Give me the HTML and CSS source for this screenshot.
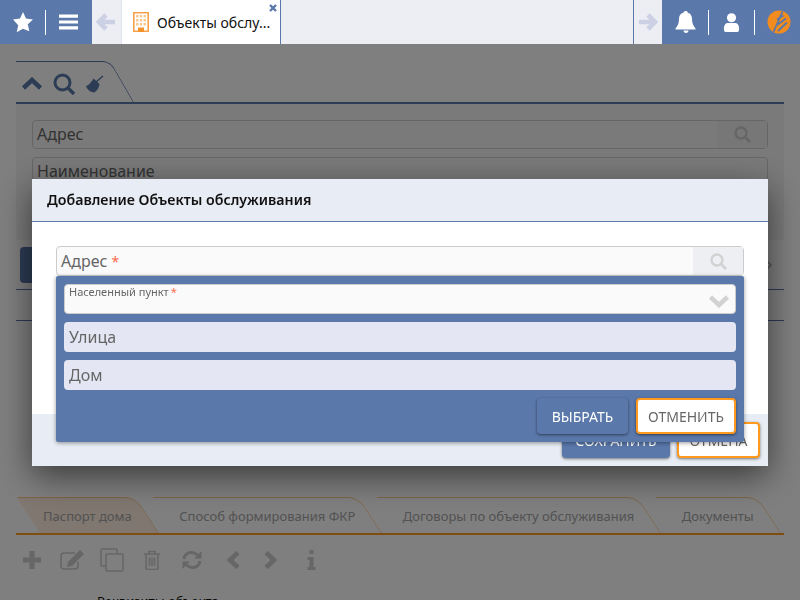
FILE: index.html
```html
<!DOCTYPE html>
<html lang="ru">
<head>
  <meta charset="UTF-8">
  <title>Объекты обслуживания</title>
  <link rel="stylesheet" href="styles.css">
</head>
<body>
  <header class="topbar">
    <div class="bar-left">
      <svg class="ico-star" viewBox="0 0 22 22"><path d="M11 1l3 6.600 7 .8-5.200 4.800 1.500 7.100L11 17.700 4.700 21.300l1.500-7.100L1 8.400l7-.8z" fill="#fff"/></svg>
      <span class="bar-sep"></span>
      <svg class="ico-menu" viewBox="0 0 20 16"><path d="M0 0h20v3.400H0zM0 6.300h20v3.400H0zM0 12.600h20V16H0z" fill="#fff"/></svg>
    </div>
    <div class="bar-arrow">
      <svg class="ico-arrow" viewBox="0 0 20 18"><path d="M10 2L3 9l7 7M4 9h15" fill="none" stroke="#ccd0e4" stroke-width="4.600"/></svg>
    </div>
    <div class="doc-tab">
      <svg class="ico-building" viewBox="0 0 16 20"><path d="M.8.800h14.400V19.200H.8z" fill="#fff" stroke="#f7a24a" stroke-width="1.600"/><path d="M3 3h2.400v2.400H3zM6.800 3h2.400v2.400H6.800zM10.600 3H13v2.400h-2.400zM3 7h2.400v2.400H3zM6.800 7h2.400v2.400H6.800zM10.600 7H13v2.400h-2.400zM3 11h2.400v2.400H3zM6.800 11h2.400v2.400H6.800zM10.600 11H13v2.400h-2.400z" fill="#fbc78f"/><path d="M5 15.500h6V20H5z" fill="#f7912a"/></svg>
      <span class="doc-title">Объекты обслу...</span>
      <svg class="ico-close" viewBox="0 0 8 8"><path d="M1 1l6 6M7 1L1 7" stroke="#5a78aa" stroke-width="2.400"/></svg>
    </div>
    <div class="bar-fill"></div>
    <div class="bar-arrow bar-arrow-next">
      <svg class="ico-arrow" viewBox="0 0 20 18"><path d="M10 2l7 7-7 7M16 9H1" fill="none" stroke="#ccd0e4" stroke-width="4.600"/></svg>
    </div>
    <div class="bar-right">
      <svg class="ico-bell" viewBox="0 0 22 22"><path d="M11 0c1 0 1.700.7 1.700 1.700 3 .7 4.300 3.200 4.300 6.300 0 4.500 1.500 7 3.500 9.500v1H.5v-1C2.500 15 4 12.500 4 8c0-3.100 1.300-5.600 4.300-6.300C8.300.7 10 0 11 0zM8.500 19.500h5c0 1.500-1 2.500-2.500 2.500s-2.500-1-2.500-2.500z" fill="#fff"/></svg>
      <span class="bar-sep"></span>
      <svg class="ico-user" viewBox="0 0 16 20"><circle cx="8" cy="5" r="4.800" fill="#fff"/><path d="M0 17c0-4 1.500-6.500 4-6.500h8c2.500 0 4 2.500 4 6.500 0 2-1 3-2.500 3h-11C1 20 0 19 0 17z" fill="#fff"/></svg>
      <span class="bar-sep"></span>
      <svg class="ico-logo" viewBox="0 0 24 24"><circle cx="12" cy="12" r="11.500" fill="#f28c1e"/><path d="M6.500 22L15.500 1.500M10 9.500l6.500-4M10 15l9-6.500M11 21l9-8.500" fill="none" stroke="#5a78aa" stroke-width="1.800"/></svg>
    </div>
  </header>

  <main class="page">
    <div class="filter-tab">
      <svg class="ico-up" viewBox="0 0 22 14"><path d="M2.500 11L11 3l8.500 8" fill="none" stroke="#5a78aa" stroke-width="4.500"/></svg>
      <svg class="ico-find" viewBox="0 0 22 22"><circle cx="9.500" cy="9.500" r="7.500" fill="none" stroke="#5a78aa" stroke-width="3"/><path d="M15 15l6 6" stroke="#5a78aa" stroke-width="3.400"/></svg>
      <svg class="ico-broom" viewBox="0 0 18 18"><path d="M10 7l7-6" stroke="#5a78aa" stroke-width="1.600"/><path d="M7.500 3.500l6 5.500c-.5 4-3 7.500-5.500 8.500-3.500-.5-7-3-8-6.500 3-1 5.500-4 7.500-7.500z" fill="#5a78aa"/></svg>
    </div>
    <section class="filter-panel">
      <div class="filter-field">
        <span>Адрес</span>
        <span class="filter-btn"><svg class="ico-search" viewBox="0 0 17 17"><circle cx="7" cy="7" r="5.500" fill="none" stroke="#ccc" stroke-width="2.400"/><path d="M11 11l5 5" stroke="#ccc" stroke-width="2.800"/></svg></span>
      </div>
      <div class="filter-field"><span>Наименование</span></div>
    </section>
    <div class="action-row">
      <span class="dark-btn"></span>
      <svg class="ico-more" viewBox="0 0 6 10"><path d="M1 1l4 4-4 4" fill="none" stroke="#aaa" stroke-width="1.500"/></svg>
    </div>
    <div class="empty-row"></div>

    <nav class="tabs">
      <span class="tab tab-active">Паспорт дома</span>
      <span class="tab">Способ формирования ФКР</span>
      <span class="tab">Договоры по объекту обслуживания</span>
      <span class="tab">Документы</span>
    </nav>

    <div class="toolbar">
      <svg class="tool tool-plus" viewBox="0 0 20 20"><path d="M7.500 1h5v6.500H19v5h-6.500V19h-5v-6.500H1v-5h6.500z" fill="#ccc"/></svg>
      <svg class="tool tool-edit" viewBox="0 0 24 20"><path d="M18 12v4a3 3 0 0 1-3 3H4a3 3 0 0 1-3-3V6a3 3 0 0 1 3-3h11" fill="none" stroke="#ccc" stroke-width="1.600"/><path d="M20 0l4 4-12 12-5 1 1-5z" fill="#ccc"/></svg>
      <svg class="tool tool-copy" viewBox="0 0 24 24"><path d="M6 18H2a1 1 0 0 1-1-1V2a1 1 0 0 1 1-1h14a1 1 0 0 1 1 1v4" fill="none" stroke="#ccc" stroke-width="1.500"/><rect x="6" y="6" width="17" height="17" rx="1" fill="none" stroke="#ccc" stroke-width="1.500"/></svg>
      <svg class="tool tool-trash" viewBox="0 0 18 20"><path d="M1 4h16M6 4V1.500h6V4M3 4v14a1.500 1.500 0 0 0 1.500 1.500h9A1.500 1.500 0 0 0 15 18V4M6.500 7.500v8.500M9 7.500v8.500M11.500 7.500v8.500" fill="none" stroke="#ccc" stroke-width="1.600"/></svg>
      <svg class="tool tool-sync" viewBox="0 0 20 20"><path d="M2 9c.5-4 3.500-6.500 7.500-6.500 2.500 0 4.500 1 6 2.500M18 11c-.5 4-3.500 6.500-7.500 6.500-2.500 0-4.500-1-6-2.500" fill="none" stroke="#ccc" stroke-width="3"/><path d="M19.500 1v7.500H12zM.5 19v-7.500H8z" fill="#ccc"/></svg>
      <svg class="tool tool-prev" viewBox="0 0 16 20"><path d="M13 2.500L5 10l8 7.500" fill="none" stroke="#ccc" stroke-width="4.600"/></svg>
      <svg class="tool tool-next" viewBox="0 0 16 20"><path d="M3 2.500l8 7.500-8 7.500" fill="none" stroke="#ccc" stroke-width="4.600"/></svg>
      <svg class="tool tool-info" viewBox="0 0 8 20"><path d="M2 0h4v4H2zM0 7h6v10h2v3H0v-3h2v-7H0z" fill="#ccc"/></svg>
    </div>

    <fieldset class="details">
      <legend>Реквизиты объекта</legend>
    </fieldset>
  </main>

  <div class="overlay">
    <div class="modal">
      <div class="modal-head">Добавление Объекты обслуживания</div>
      <div class="modal-body">
        <div class="address">
          <span class="address-label">Адрес <i>*</i></span>
          <span class="address-btn"><svg class="ico-search" viewBox="0 0 17 17"><circle cx="7" cy="7" r="5.500" fill="none" stroke="#d2d2d2" stroke-width="2.400"/><path d="M11 11l5 5" stroke="#d2d2d2" stroke-width="2.800"/></svg></span>
        </div>
        <div class="picker">
          <div class="picker-select">
            <span class="picker-label">Населенный пункт<i>*</i></span>
            <svg class="ico-down" viewBox="0 0 22 14"><path d="M2.500 3L11 11l8.500-8" fill="none" stroke="#d2d2d2" stroke-width="4.500"/></svg>
          </div>
          <div class="picker-field">Улица</div>
          <div class="picker-field">Дом</div>
          <div class="picker-actions">
            <button class="btn btn-blue btn-pick">ВЫБРАТЬ</button>
            <button class="btn btn-white btn-undo">ОТМЕНИТЬ</button>
          </div>
        </div>
      </div>
      <div class="modal-foot">
        <button class="btn btn-blue btn-save">СОХРАНИТЬ</button>
        <button class="btn btn-white btn-cancel">ОТМЕНА</button>
      </div>
    </div>
  </div>
</body>
</html>
```

FILE: styles.css
```css
html, body {
  height: 100%;
  overflow: hidden;
}
body {
  margin: 0;
  background: #fff;
  font-family: "Noto Sans", sans-serif;
  color: #666;
}
svg {
  display: block;
  flex: none;
}

/* top bar */
.topbar {
  display: flex;
  height: 44px;
  background: #eceef4;
}
.bar-left, .bar-right {
  display: flex;
  align-items: center;
  background: #5a78aa;
}
.bar-left {
  width: 92px;
  padding-left: 12px;
  box-sizing: border-box;
}
.bar-right {
  width: 138px;
  padding-left: 13px;
  box-sizing: border-box;
}
.bar-sep {
  width: 1px;
  height: 25px;
  background: #fff;
}
.ico-star { width: 22px; height: 22px; margin-right: 11px; }
.ico-menu { width: 19px; height: 16px; margin-left: 13px; }
.ico-bell { width: 22px; height: 22px; margin-right: 11px; }
.ico-user { width: 17px; height: 19px; margin: 0 14px; }
.ico-logo { width: 24px; height: 24px; margin-left: 12px; }
.bar-arrow {
  display: flex;
  align-items: center;
  justify-content: center;
  width: 28px;
}
.bar-arrow-next {
  border-left: 1px solid #5a78aa;
}
.ico-arrow { width: 20px; height: 18px; }
.doc-tab {
  display: flex;
  align-items: center;
  position: relative;
  width: 160px;
  margin-left: 1px;
  padding-left: 11px;
  box-sizing: border-box;
  background: #fff;
  border-left: 1px solid #dfe4ee;
  border-right: 1px solid #5a78aa;
}
.ico-building { width: 16px; height: 20px; margin-right: 8px; }
.doc-title {
  font-size: 14px;
  color: #111;
  white-space: nowrap;
}
.ico-close {
  position: absolute;
  top: 4px;
  right: 3px;
  width: 8px;
  height: 8px;
}
.bar-fill { flex: 1; }

/* page under the dialog */
.page {
  padding: 17px 16px 0;
}
.filter-tab {
  display: flex;
  align-items: center;
  position: relative;
  width: 118px;
  height: 41px;
  box-sizing: border-box;
  padding: 5px 0 0 5px;
}
.filter-tab::before {
  content: "";
  position: absolute;
  top: 0;
  left: 23px;
  right: 0;
  height: 40px;
  border-top: 1px solid #5a78aa;
  border-right: 1px solid #5a78aa;
  border-radius: 0 8px 0 0;
  transform: skewX(30deg);
  transform-origin: bottom right;
}
.ico-up { width: 22px; height: 14px; }
.ico-find { width: 22px; height: 22px; margin-left: 10px; }
.ico-broom { width: 18px; height: 18px; margin-left: 11px; }
.filter-panel {
  height: 138px;
  padding: 16px 16px 0;
  box-sizing: border-box;
  background: #f5f5f5;
  border-top: 2px solid #5a78aa;
}
.filter-field {
  display: flex;
  justify-content: space-between;
  height: 29px;
  box-sizing: border-box;
  margin-bottom: 8px;
  padding-left: 4px;
  font-size: 16px;
  line-height: 27px;
  border: 1px solid #ccc;
  border-radius: 4px;
}
.filter-btn {
  display: flex;
  align-items: center;
  justify-content: center;
  width: 50px;
  background: #eee;
}
.ico-search { width: 17px; height: 17px; }
.action-row {
  display: flex;
  justify-content: space-between;
  align-items: center;
  height: 49px;
  padding: 0 12px 0 4px;
  border-bottom: 1px solid #5a78aa;
}
.dark-btn {
  width: 120px;
  height: 36px;
  background: #5a78aa;
  border-radius: 4px;
}
.ico-more { width: 6px; height: 10px; }
.empty-row {
  height: 30px;
  border-bottom: 1px solid #5a78aa;
}

/* tabs */
.tabs {
  display: flex;
  height: 36px;
  margin-top: 176px;
  padding-left: 24px;
  border-bottom: 2px solid #ff9a1f;
}
.tab {
  position: relative;
  height: 36px;
  margin-right: 17.5px;
  padding: 0 27px 0 3px;
  font-size: 13px;
  line-height: 38px;
  color: #a4a4a4;
  white-space: nowrap;
}
.tab::before {
  content: "";
  position: absolute;
  top: 0;
  left: 0;
  right: 0;
  bottom: 0;
  z-index: -1;
  border-top: 1px solid #ffc78a;
  border-right: 1px solid #ffc78a;
  border-radius: 0 10px 0 0;
  transform: skewX(33deg);
  transform-origin: bottom right;
}
.tab-active::before {
  background: #ffefe0;
}
.toolbar {
  display: flex;
  align-items: center;
  height: 50px;
  padding-left: 6px;
}
.tool { height: 20px; }
.tool-plus { width: 20px; margin-right: 18px; }
.tool-edit { width: 24px; margin-right: 16px; }
.tool-copy { width: 24px; height: 24px; margin-right: 19px; }
.tool-trash { width: 18px; margin-right: 20px; }
.tool-sync { width: 22px; margin-right: 22px; }
.tool-prev { width: 16px; margin-right: 22px; }
.tool-next { width: 16px; margin-right: 28px; }
.tool-info { width: 9px; }
.details {
  margin: 7px 0 0;
  padding: 0;
  border: 0;
  border-top: 1px solid #ff9a1f;
}
.details legend {
  margin-left: 32px;
  padding: 0 16px 0 49px;
  font-size: 13px;
  color: #111;
}

/* dialog */
.overlay {
  position: fixed;
  top: 44px;
  left: 0;
  right: 0;
  bottom: 0;
  padding: 135px 32px 0;
  background: rgba(0, 0, 0, 0.5);
}
.modal {
  position: relative;
  background: #fff;
  box-shadow: 0 10px 32px rgba(0, 0, 0, 0.55);
}
.modal-head {
  height: 42px;
  padding-left: 15px;
  font-size: 14.2px;
  font-weight: 600;
  line-height: 42px;
  color: #111;
  background: #e8ecf4;
  border-bottom: 1px solid #5a78aa;
}
.modal-body {
  position: relative;
  height: 192px;
  padding: 24px 24px 0;
  box-sizing: border-box;
}
.address {
  display: flex;
  justify-content: space-between;
  height: 30px;
  padding-left: 4px;
  box-sizing: border-box;
  font-size: 16px;
  line-height: 28px;
  background: #fafafa;
  border: 1px solid #ccc;
  border-radius: 4px;
}
.address-label i, .picker-label i {
  font-style: normal;
  color: #ff6a4d;
}
.address-label i {
  font-size: 14px;
}
.address-btn {
  display: flex;
  align-items: center;
  justify-content: center;
  width: 50px;
  background: #eeeff3;
}
.picker {
  position: absolute;
  top: 54px;
  left: 24px;
  right: 24px;
  height: 166px;
  padding: 8px;
  box-sizing: border-box;
  background: #5a78aa;
  border-radius: 2px;
  box-shadow: 0 1px 4px rgba(0, 0, 0, 0.4);
}
.picker-select {
  display: flex;
  justify-content: space-between;
  height: 30px;
  padding: 0 5px 0 4px;
  box-sizing: border-box;
  background: #fafafa;
  border: 1px solid #ccc;
  border-radius: 4px;
}
.picker-label {
  font-size: 11px;
  line-height: 13px;
}
.picker-label i {
  margin-left: 2px;
}
.ico-down { width: 22px; height: 14px; margin-top: 9px; }
.picker-field {
  height: 30px;
  margin-top: 8px;
  padding-left: 5px;
  font-size: 16px;
  line-height: 30px;
  background: #e4e6f3;
  border-radius: 4px;
}
.picker-actions {
  display: flex;
  justify-content: flex-end;
  gap: 8px;
  margin-top: 8px;
}
.btn {
  height: 36px;
  padding: 0;
  font-family: inherit;
  font-size: 14px;
  border-radius: 4px;
  box-shadow: 0 1px 3px rgba(0, 0, 0, 0.5);
}
.btn-blue {
  color: #fff;
  background: #5a78aa;
  border: 0;
}
.btn-white {
  color: #666;
  background: #fff;
  border: 2px solid #ff9a1f;
}
.btn-pick { width: 91px; }
.btn-undo { width: 100px; }
.modal-foot {
  display: flex;
  justify-content: flex-end;
  gap: 7px;
  height: 52px;
  padding: 8px 8px 0 0;
  box-sizing: border-box;
  background: #e8ecf4;
  border-radius: 0 0 2px 2px;
}
.btn-save { width: 108px; }
.btn-cancel { width: 83px; }
```
